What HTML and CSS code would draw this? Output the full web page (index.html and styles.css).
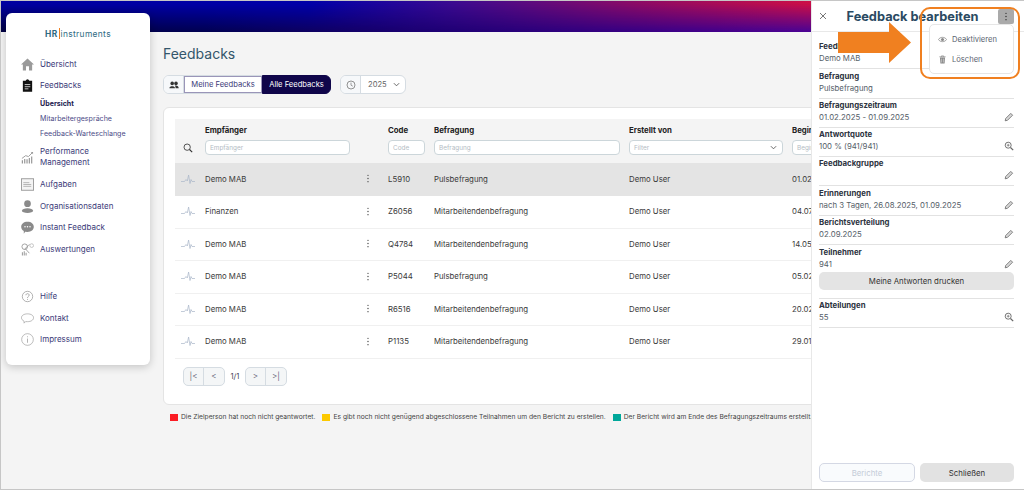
FILE: index.html
```html
<!DOCTYPE html>
<html lang="de">
<head>
  <meta charset="utf-8">
  <title>Feedbacks</title>
  <link rel="stylesheet" href="styles.css">
</head>
<body>
  <svg class="sprite" xmlns="http://www.w3.org/2000/svg">
    <symbol id="pulse" viewBox="0 0 14 10">
      <path d="M0 7.5 H3.5 L5 5.5 L6.3 7 L7.6 1 L9 9.5 L10 5.5 L11 7.5 H14" fill="none" stroke="currentColor" stroke-width=".7"/>
    </symbol>
    <symbol id="kebab" viewBox="0 0 4 10">
      <circle cx="2" cy="1.5" r=".8" fill="currentColor"/>
      <circle cx="2" cy="5" r=".8" fill="currentColor"/>
      <circle cx="2" cy="8.5" r=".8" fill="currentColor"/>
    </symbol>
    <symbol id="pencil" viewBox="0 0 10 10">
      <path d="M1.2 8.8 L1.7 6.5 L6.8 1.4 L8.6 3.2 L3.5 8.3 Z" fill="#d8d8d8" stroke="#666" stroke-width=".8" stroke-linejoin="round"/>
    </symbol>
    <symbol id="zoomin" viewBox="0 0 10 10">
      <circle cx="4.2" cy="4.2" r="3" fill="none" stroke="#666" stroke-width=".9"/>
      <path d="M6.5 6.5 L9.2 9.2" stroke="#666" stroke-width="1.2"/>
      <path d="M2.8 4.2 H5.6 M4.2 2.8 V5.6" stroke="#666" stroke-width=".7"/>
    </symbol>
    <symbol id="chevron" viewBox="0 0 8 5">
      <path d="M1 1 L4 4 L7 1" fill="none" stroke="currentColor" stroke-width="1"/>
    </symbol>
  </svg>

  <div class="frame">
    <header class="topbar"></header>

    <div class="layout">
      <nav class="sidebar">
        <div class="logo"><b>HR</b><i class="logo-bar"></i><span>instruments</span></div>

        <ul class="menu">
          <li class="menu-item item-overview">
            <svg class="menu-icon" viewBox="0 0 14 14"><path d="M7 .5 L14 7 H12 V13.5 H8.6 V9 H5.4 V13.5 H2 V7 H0 Z" fill="#9a9a9a"/></svg>
            <span>Übersicht</span>
          </li>
          <li class="menu-item item-feedbacks">
            <svg class="menu-icon" viewBox="0 0 14 14"><path d="M2 2 H5 Q5.5 .3 7 .3 Q8.5 .3 9 2 H12 V13.7 H2 Z" fill="#111"/><path d="M4 6 H10 M4 8.3 H10 M4 10.6 H8" stroke="#fff" stroke-width=".8"/></svg>
            <span>Feedbacks</span>
          </li>
          <li class="submenu-item current">Übersicht</li>
          <li class="submenu-item">Mitarbeitergespräche</li>
          <li class="submenu-item">Feedback-Warteschlange</li>
          <li class="menu-item item-performance">
            <svg class="menu-icon" viewBox="0 0 14 14"><path d="M1 8 L5 5 L8 6 L12.5 1.5" fill="none" stroke="#999" stroke-width="1"/><path d="M10.5 1 H13 V3.5 Z" fill="#999"/><path d="M1.5 10 V13.5 M4 8.5 V13.5 M6.5 9 V13.5 M9 7.5 V13.5 M11.5 6 V13.5" stroke="#999" stroke-width="1.3"/></svg>
            <span>Performance<br>Management</span>
          </li>
          <li class="menu-item">
            <svg class="menu-icon" viewBox="0 0 14 14"><rect x=".5" y=".8" width="13" height="12.4" fill="#f4f4f4" stroke="#999"/><path d="M2.5 5 H9 M2.5 7 H11 M2.5 9 H11" stroke="#aaa" stroke-width=".9"/></svg>
            <span>Aufgaben</span>
          </li>
          <li class="menu-item">
            <svg class="menu-icon" viewBox="0 0 14 14"><circle cx="7" cy="4" r="3.6" fill="#8a8a8a"/><ellipse cx="7" cy="11.5" rx="6" ry="2.5" fill="#8a8a8a"/></svg>
            <span>Organisationsdaten</span>
          </li>
          <li class="menu-item">
            <svg class="menu-icon" viewBox="0 0 14 14"><path d="M7 .8 C11 .8 13.8 3 13.8 6.3 C13.8 9.6 11 11.8 7 11.8 L4.5 11.7 L3 13.6 V10.8 C1.2 9.8 .2 8.2 .2 6.3 C.2 3 3 .8 7 .8 Z" fill="#8a8a8a"/><circle cx="4.3" cy="6.3" r=".8" fill="#fff"/><circle cx="7" cy="6.3" r=".8" fill="#fff"/><circle cx="9.7" cy="6.3" r=".8" fill="#fff"/></svg>
            <span>Instant Feedback</span>
          </li>
          <li class="menu-item item-reports">
            <svg class="menu-icon" viewBox="0 0 14 14"><circle cx="4" cy="4" r="3" fill="none" stroke="#888" stroke-width=".8"/><circle cx="11.5" cy="2.8" r="2" fill="none" stroke="#aaa" stroke-width=".7"/><path d="M3.5 7 L9 1.5 M5 6.5 L9 11" stroke="#888" stroke-width=".8"/><path d="M1.5 10 V13.5 M3.5 9 V13.5 M5.5 10.5 V13.5" stroke="#999" stroke-width="1.1"/></svg>
            <span>Auswertungen</span>
          </li>
          <li class="menu-item">
            <svg class="menu-icon" viewBox="0 0 14 14"><circle cx="7" cy="7" r="5.6" fill="none" stroke="#999" stroke-width=".8"/><path d="M5.3 5.6 C5.3 3.4 8.8 3.4 8.8 5.6 C8.8 7 7 6.9 7 8.5 M7 9.6 V10.6" fill="none" stroke="#999" stroke-width=".9"/></svg>
            <span>Hilfe</span>
          </li>
          <li class="menu-item">
            <svg class="menu-icon" viewBox="0 0 14 14"><path d="M7 2 C10.8 2 13.5 3.7 13.5 6.2 C13.5 8.7 10.8 10.4 7 10.4 L5 10.3 L3.3 12 V9.8 C1.5 9 .5 7.7 .5 6.2 C.5 3.7 3.2 2 7 2 Z" fill="none" stroke="#999" stroke-width=".7"/></svg>
            <span>Kontakt</span>
          </li>
          <li class="menu-item">
            <svg class="menu-icon" viewBox="0 0 14 14"><circle cx="7" cy="7" r="6.3" fill="none" stroke="#999" stroke-width=".7"/><path d="M7 6 V10.5 M7 3.6 V4.6" stroke="#999" stroke-width=".8"/></svg>
            <span>Impressum</span>
          </li>
        </ul>
      </nav>

      <main class="content">
        <h1 class="page-title">Feedbacks</h1>

        <div class="toolbar">
          <div class="switch">
            <span class="addon">
              <svg class="addon-icon" viewBox="0 0 10 10"><circle cx="3.2" cy="3.4" r="1.8" fill="#333"/><circle cx="7" cy="3.4" r="1.8" fill="#333"/><path d="M.4 8.2 C.4 5.6 6 5.6 6 8.2 Z M6.6 8.2 C6.6 6.8 6.2 6.2 5.8 5.8 C7.6 5.2 9.7 6 9.7 8.2 Z" fill="#333"/></svg>
            </span>
            <button class="switch-btn">Meine Feedbacks</button>
            <button class="switch-btn active">Alle Feedbacks</button>
          </div>
          <div class="year">
            <span class="addon">
              <svg class="addon-icon" viewBox="0 0 10 10"><circle cx="5" cy="5" r="4" fill="none" stroke="#777" stroke-width=".8"/><path d="M5 2.6 V5.2 L6.8 6.2" fill="none" stroke="#777" stroke-width=".7"/></svg>
            </span>
            <span class="year-value">2025 <svg class="chevron" viewBox="0 0 8 5"><use href="#chevron"/></svg></span>
          </div>
        </div>

        <section class="card">
          <table class="feedback-table">
            <colgroup>
              <col class="col-icon"><col class="col-name"><col class="col-menu"><col class="col-code">
              <col class="col-survey"><col class="col-author"><col class="col-start">
            </colgroup>
            <thead>
              <tr>
                <th class="search-cell">
                  <svg class="search-icon" viewBox="0 0 12 12"><circle cx="5" cy="5" r="3.8" fill="none" stroke="#333" stroke-width="1"/><path d="M7.8 7.8 L11 11" stroke="#333" stroke-width="1.3"/></svg>
                </th>
                <th>Empfänger<div class="filter">Empfänger</div></th>
                <th></th>
                <th>Code<div class="filter">Code</div></th>
                <th>Befragung<div class="filter">Befragung</div></th>
                <th>Erstellt von<div class="filter filter-select">Filter <svg class="chevron" viewBox="0 0 8 5"><use href="#chevron"/></svg></div></th>
                <th>Beginn<div class="filter">Beginn</div></th>
              </tr>
            </thead>
            <tbody>
              <tr class="selected">
                <td><svg class="pulse"><use href="#pulse"/></svg></td><td>Demo MAB</td>
                <td><svg class="kebab"><use href="#kebab"/></svg></td>
                <td>L5910</td><td>Pulsbefragung</td><td>Demo User</td><td>01.02.2025</td>
              </tr>
              <tr>
                <td><svg class="pulse"><use href="#pulse"/></svg></td><td>Finanzen</td>
                <td><svg class="kebab"><use href="#kebab"/></svg></td>
                <td>Z6056</td><td>Mitarbeitendenbefragung</td><td>Demo User</td><td>04.07.2025</td>
              </tr>
              <tr>
                <td><svg class="pulse"><use href="#pulse"/></svg></td><td>Demo MAB</td>
                <td><svg class="kebab"><use href="#kebab"/></svg></td>
                <td>Q4784</td><td>Mitarbeitendenbefragung</td><td>Demo User</td><td>14.05.2025</td>
              </tr>
              <tr>
                <td><svg class="pulse"><use href="#pulse"/></svg></td><td>Demo MAB</td>
                <td><svg class="kebab"><use href="#kebab"/></svg></td>
                <td>P5044</td><td>Pulsbefragung</td><td>Demo User</td><td>05.02.2025</td>
              </tr>
              <tr>
                <td><svg class="pulse"><use href="#pulse"/></svg></td><td>Demo MAB</td>
                <td><svg class="kebab"><use href="#kebab"/></svg></td>
                <td>R6516</td><td>Mitarbeitendenbefragung</td><td>Demo User</td><td>20.02.2025</td>
              </tr>
              <tr>
                <td><svg class="pulse"><use href="#pulse"/></svg></td><td>Demo MAB</td>
                <td><svg class="kebab"><use href="#kebab"/></svg></td>
                <td>P1135</td><td>Mitarbeitendenbefragung</td><td>Demo User</td><td>29.01.2025</td>
              </tr>
            </tbody>
          </table>

          <div class="pager">
            <div class="pager-group">
              <button class="pager-btn">|&lt;</button>
              <button class="pager-btn">&lt;</button>
            </div>
            <span class="pager-count">1/1</span>
            <div class="pager-group">
              <button class="pager-btn">&gt;</button>
              <button class="pager-btn">&gt;|</button>
            </div>
          </div>
        </section>

        <div class="legend">
          <span class="legend-item"><i class="swatch red"></i>Die Zielperson hat noch nicht geantwortet.</span>
          <span class="legend-item"><i class="swatch yellow"></i>Es gibt noch nicht genügend abgeschlossene Teilnahmen um den Bericht zu erstellen.</span>
          <span class="legend-item"><i class="swatch teal"></i>Der Bericht wird am Ende des Befragungszeitraums erstellt.</span>
        </div>
      </main>
    </div>

    <aside class="panel">
      <div class="panel-head">
        <svg class="panel-close" viewBox="0 0 8 8"><path d="M1 1 L7 7 M7 1 L1 7" stroke="#777" stroke-width="1"/></svg>
        <h2 class="panel-title">Feedback bearbeiten</h2>
        <span class="panel-menu"><svg class="kebab"><use href="#kebab"/></svg></span>
      </div>

      <div class="panel-body">
        <div class="field"><div><b>Feedback</b><p>Demo MAB</p></div></div>
        <div class="field"><div><b>Befragung</b><p>Pulsbefragung</p></div></div>
        <div class="field"><div><b>Befragungszeitraum</b><p>01.02.2025 - 01.09.2025</p></div><svg class="field-icon"><use href="#pencil"/></svg></div>
        <div class="field"><div><b>Antwortquote</b><p>100 % (941/941)</p></div><svg class="field-icon"><use href="#zoomin"/></svg></div>
        <div class="field"><div><b>Feedbackgruppe</b><p>&nbsp;</p></div><svg class="field-icon"><use href="#pencil"/></svg></div>
        <div class="field"><div><b>Erinnerungen</b><p>nach 3 Tagen, 26.08.2025, 01.09.2025</p></div><svg class="field-icon"><use href="#pencil"/></svg></div>
        <div class="field"><div><b>Berichtsverteilung</b><p>02.09.2025</p></div><svg class="field-icon"><use href="#pencil"/></svg></div>
        <div class="field field-print">
          <div class="field-row"><div><b>Teilnehmer</b><p>941</p></div><svg class="field-icon"><use href="#pencil"/></svg></div>
          <button class="print-btn">Meine Antworten drucken</button>
        </div>
        <div class="field"><div><b>Abteilungen</b><p>55</p></div><svg class="field-icon"><use href="#zoomin"/></svg></div>
      </div>

      <div class="panel-foot">
        <button class="foot-btn disabled">Berichte</button>
        <button class="foot-btn">Schließen</button>
      </div>

      <div class="dropdown">
        <div class="dropdown-item">
          <svg class="dropdown-icon" viewBox="0 0 10 10"><path d="M.5 5 C2.5 1.8 7.5 1.8 9.5 5 C7.5 8.2 2.5 8.2 .5 5 Z" fill="none" stroke="#888" stroke-width=".9"/><circle cx="5" cy="5" r="1.7" fill="#888"/></svg>
          Deaktivieren
        </div>
        <div class="dropdown-item">
          <svg class="dropdown-icon" viewBox="0 0 10 10"><path d="M1.5 2 H8.5 M3.8 2 V1 H6.2 V2" fill="none" stroke="#888" stroke-width=".8"/><path d="M2.2 2.8 H7.8 L7.3 9.4 H2.7 Z" fill="#888"/><path d="M4 4 V8.4 M6 4 V8.4" stroke="#fff" stroke-width=".5"/></svg>
          Löschen
        </div>
      </div>
    </aside>

    <div class="callout-ring"></div>
    <svg class="callout-arrow" viewBox="0 0 73 41"><path d="M0 10 H51 V0 L73 20.5 L51 41 V31 H0 Z" fill="#f08020"/></svg>
  </div>
</body>
</html>
```

FILE: styles.css
```css
* {
  box-sizing: border-box;
}

body {
  margin: 0;
  font-family: Inter, "Noto Sans", sans-serif;
  font-size: 7.6px;
  color: #333;
}

button {
  font-family: inherit;
  cursor: pointer;
}

.sprite {
  display: none;
}

.frame {
  position: relative;
  width: 1024px;
  height: 490px;
  overflow: hidden;
  background-color: #f4f4f4;
  border: 1px solid #c6c6c6;
  border-right: none;
}

/* header bar with the colour wash, darker along the bottom edge */
.topbar {
  position: relative;
  height: 31px;
  background: linear-gradient(to right, #0000a0 0, #0000a8 30%, #3a0a90 44%, #8a0a66 62%, #de0f3e 84%, #e4282c 100%);
}

.topbar::after {
  content: "";
  display: block;
  height: 100%;
  background: linear-gradient(to right, #000040 0, #000050 20%, #1a0070 40%, #40008c 70%, #5c0aa8 100%);
  -webkit-mask-image: linear-gradient(to bottom, transparent 10%, #000 100%);
  mask-image: linear-gradient(to bottom, transparent 10%, #000 100%);
}

.layout {
  display: flex;
  margin-top: -19px;
}

/* sidebar */
.sidebar {
  position: relative;
  flex: none;
  width: 144px;
  height: 352px;
  margin-left: 5px;
  padding-top: 15px;
  background-color: #fff;
  border-radius: 6px;
  box-shadow: 0 2px 8px rgba(0, 0, 0, 0.2);
}

.logo {
  display: flex;
  justify-content: center;
  align-items: center;
  height: 11px;
  font-size: 8.4px;
  letter-spacing: 0.35px;
  color: #2f6a82;
}

.logo-bar {
  width: 1px;
  height: 11px;
  margin: 0 1px;
  background-color: #f08020;
}

.menu {
  margin: 15px 0 0;
  padding: 0;
  list-style: none;
}

.menu-item {
  display: flex;
  align-items: center;
  gap: 6px;
  height: 21.5px;
  padding-left: 15px;
  font-size: 8px;
  line-height: 11px;
  color: #3b3a78;
}

.menu-icon {
  flex: none;
  width: 13px;
  height: 13px;
}

.item-feedbacks {
  height: 20.5px;
}

.item-performance {
  height: 24px;
  margin: 4px 0 5px;
}

.item-reports {
  margin-bottom: 26px;
}

.submenu-item {
  height: 15px;
  padding-left: 34px;
  line-height: 15px;
  font-size: 7.1px;
  color: #4b4a86;
}

.submenu-item.current {
  font-weight: 700;
  color: #24224f;
}

/* main column */
.content {
  flex: 1;
  min-width: 0;
  padding: 31px 0 0 13px;
  overflow: hidden;
}

.page-title {
  margin: 0;
  font-size: 14px;
  font-weight: 400;
  line-height: 20px;
  color: #33566b;
}

.toolbar {
  display: flex;
  gap: 9px;
  margin-top: 11px;
}

.switch,
.year {
  display: flex;
  height: 19px;
  background-color: #fff;
  border: 1px solid #d5dce2;
  border-radius: 6px;
}

.addon {
  display: flex;
  align-items: center;
  justify-content: center;
  width: 20px;
  background-color: #f6f8fa;
  border-right: 1px solid #d5dce2;
  border-radius: 5px 0 0 5px;
}

.addon-icon {
  width: 10px;
  height: 10px;
}

.switch-btn {
  width: 78px;
  padding: 0;
  font-size: 7.6px;
  color: #3b3a78;
  background-color: #fff;
  border: 1px solid #9a95b8;
}

.switch-btn.active {
  width: 69px;
  margin: -1px -1px -1px 0;
  color: #fff;
  background-color: #10064a;
  border-color: #10064a;
  border-radius: 0 6px 6px 0;
}

.year-value {
  display: flex;
  align-items: center;
  gap: 6px;
  width: 44px;
  padding-left: 7px;
  font-size: 7.6px;
  color: #666;
}

.chevron {
  width: 7px;
  height: 5px;
  color: #555;
}

/* table card */
.card {
  width: 900px;
  height: 298px;
  margin-top: 13px;
  padding: 11px 12px 11px 11px;
  background-color: #fff;
  border: 1px solid #e4e4e4;
  border-radius: 6px;
}

.feedback-table {
  width: 837px;
  table-layout: fixed;
  border-collapse: collapse;
}

.col-icon { width: 30px; }
.col-name { width: 154px; }
.col-menu { width: 29px; }
.col-code { width: 46px; }
.col-survey { width: 195px; }
.col-author { width: 163px; }

.feedback-table thead {
  background-color: #f4f4f4;
}

.feedback-table th {
  height: 44px;
  padding: 6px 9px 0 0;
  vertical-align: top;
  text-align: left;
  font-size: 7.8px;
  font-weight: 700;
  color: #222;
}

.feedback-table th.search-cell {
  padding: 24px 0 0 8px;
}

.search-icon {
  display: block;
  width: 10px;
  height: 10px;
}

.filter {
  display: flex;
  align-items: center;
  justify-content: space-between;
  height: 15px;
  margin-top: 5px;
  padding: 0 4px;
  overflow: hidden;
  font-size: 6.4px;
  font-weight: 400;
  color: #b4bcc4;
  background-color: #fff;
  border: 1px solid #ccd6da;
  border-radius: 4px;
}

.filter-select {
  padding-right: 5px;
}

.feedback-table td {
  height: 32.5px;
  padding: 0 0 1px;
  font-size: 7.8px;
  color: #3a3a3a;
  border-bottom: 1px solid #f0f0f0;
}

.feedback-table .selected td {
  background-color: #e4e4e4;
  border-bottom: none;
}

.pulse {
  display: block;
  width: 14px;
  height: 10px;
  margin-left: 6px;
  color: #a9b6c8;
}

.kebab {
  display: block;
  width: 4px;
  height: 9px;
  margin-left: 7px;
  color: #555;
}

.pager {
  display: flex;
  align-items: center;
  margin: 8px 0 0 8px;
}

.pager-group {
  display: flex;
  height: 19px;
  background-color: #f4f6f7;
  border: 1px solid #d5dce2;
  border-radius: 5px;
}

.pager-btn {
  width: 20px;
  padding: 0;
  font-size: 8px;
  color: #667;
  background: none;
  border: none;
  border-right: 1px solid #d5dce2;
}

.pager-btn:last-child {
  border-right: none;
}

.pager-count {
  width: 20px;
  text-align: center;
  font-size: 7.6px;
  color: #445;
}

.legend {
  display: flex;
  gap: 7px;
  margin: 8px 0 0 7px;
  white-space: nowrap;
  font-size: 6.7px;
  color: #444;
}

.legend-item {
  display: flex;
  align-items: center;
  gap: 3px;
}

.swatch {
  width: 8px;
  height: 7px;
}

.red { background-color: #fb1c24; }
.yellow { background-color: #fcc900; }
.teal { background-color: #00a79a; }

/* right hand drawer */
.panel {
  position: absolute;
  top: 0;
  right: 0;
  bottom: 0;
  display: flex;
  flex-direction: column;
  width: 213px;
  background-color: #fff;
  border-left: 1px solid #e8e8e8;
}

.panel-head {
  display: flex;
  align-items: center;
  justify-content: space-between;
  height: 31px;
  padding: 0 10px 0 7px;
  border-bottom: 1px solid #e8e8e8;
}

.panel-close {
  width: 8px;
  height: 8px;
}

.panel-title {
  margin: 0;
  font-size: 12.8px;
  font-weight: 700;
  color: #2a4a62;
}

.panel-menu {
  display: flex;
  align-items: center;
  justify-content: center;
  width: 16px;
  height: 15px;
  background-color: #aaa;
  border-radius: 2px;
}

.panel-menu .kebab {
  margin: 0;
  color: #333;
}

.panel-body {
  padding: 8px 10px 0 7px;
}

.field {
  display: flex;
  align-items: flex-end;
  justify-content: space-between;
  height: 29.3px;
  padding-bottom: 4px;
  font-size: 7.8px;
  line-height: 12px;
  border-bottom: 1px solid #e2e2e2;
}

.field + .field {
  padding-top: 1px;
}

.field b {
  display: block;
  color: #2c3340;
}

.field p {
  margin: 0;
  color: #555e68;
}

.field-icon {
  flex: none;
  width: 10px;
  height: 10px;
  margin-bottom: 1px;
}

.field.field-print {
  display: block;
  height: 54px;
  padding-top: 1px;
}

.field-row {
  display: flex;
  align-items: flex-end;
  justify-content: space-between;
}

.print-btn {
  display: block;
  width: 100%;
  height: 18px;
  margin-top: 2px;
  padding: 0;
  font-size: 7.8px;
  color: #333;
  background-color: #e4e4e4;
  border: none;
  border-radius: 5px;
}

.panel-foot {
  display: flex;
  gap: 5px;
  margin-top: auto;
  padding: 0 10px 7px 7px;
}

.foot-btn {
  flex: 1;
  height: 19px;
  padding: 0;
  font-size: 7.8px;
  color: #333;
  background-color: #e2e2e2;
  border: none;
  border-radius: 5px;
}

.foot-btn.disabled {
  color: #c4ccd8;
  background-color: #f9fbfd;
  border: 1px solid #d4d8e4;
}

.dropdown {
  position: absolute;
  top: 23px;
  right: 10px;
  width: 85px;
  height: 50px;
  padding-top: 4px;
  background-color: #fff;
  border: 1px solid #e6e6e6;
  border-radius: 5px;
}

.dropdown-item {
  display: flex;
  align-items: center;
  gap: 5px;
  height: 20px;
  padding-left: 8px;
  font-size: 7.6px;
  color: #5b6470;
}

.dropdown-icon {
  width: 9px;
  height: 9px;
}

/* annotations drawn on the screenshot */
.callout-ring {
  position: absolute;
  top: 6px;
  left: 919px;
  width: 100px;
  height: 72px;
  border: 2px solid #f08020;
  border-radius: 10px;
}

.callout-arrow {
  position: absolute;
  top: 21px;
  left: 837px;
  width: 73px;
  height: 41px;
}
```
